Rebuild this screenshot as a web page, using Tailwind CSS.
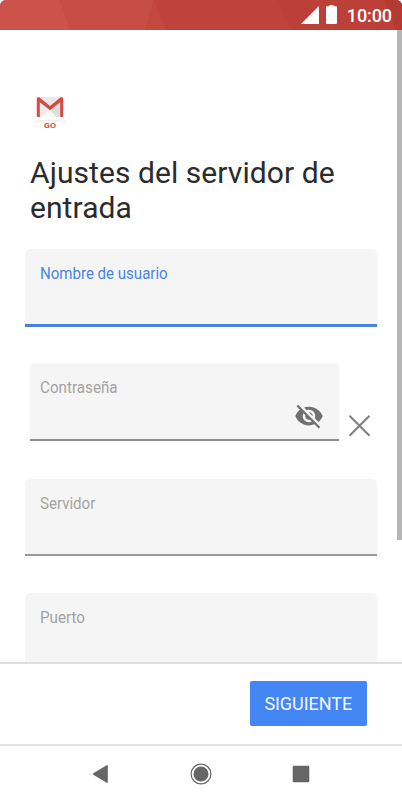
<!DOCTYPE html>
<html lang="es">
<head>
<meta charset="utf-8">
<meta name="viewport" content="width=device-width, initial-scale=1">
<title>Ajustes del servidor de entrada</title>
<script src="https://cdn.jsdelivr.net/npm/@tailwindcss/browser@4"></script>
</head>
<body class="bg-white">
<div class="flex h-[804px] w-[402px] flex-col overflow-hidden bg-white font-['Roboto',sans-serif]">
  <header class="relative h-[30px] shrink-0 overflow-hidden rounded-t-[6px] bg-[#bf433a]">
    <svg class="absolute inset-0" width="402" height="30" viewBox="0 0 402 30" aria-hidden="true">
      <path fill="#cb5349" d="M0 0H60L71 30H0z"/>
      <path fill="#c74e44" d="M60 0H154L145 30H71z"/>
      <path fill="#c3493f" d="M154 0L166 30H145z"/>
      <path fill="#bc4037" d="M278 0H402V30H291z"/>
      <path fill="#b43930" d="M384 0H402V30H396z"/>
    </svg>
    <div class="relative flex h-full items-center justify-end pr-[10px] text-white">
      <svg class="mr-[7px]" width="18" height="18" viewBox="0 0 18 18" fill="currentColor"><path d="M18 0V18H0z"/></svg>
      <svg class="mr-[10px] mb-[2px]" width="11" height="19" viewBox="0 0 11 19" fill="currentColor"><path d="M3 0h5v1.300h2q1 0 1 1V18q0 1-1 1H1q-1 0-1-1V2.300q0-1 1-1h2z"/></svg>
      <span class="pt-px text-[18px] leading-[30px] font-medium tracking-[-0.1px]">10:00</span>
    </div>
  </header>

  <main class="flex h-[632px] shrink-0 overflow-hidden">
    <div class="w-[397px] shrink-0 pt-[66px] pl-[25px]">
      <svg class="ml-[9px]" width="32" height="34" viewBox="0 0 32 34" aria-label="Gmail Go">
        <path fill="#ececec" d="M3 1h26v20H3z"/>
        <path fill="#f8f8f8" d="M7 21L16 13.500 25 21z"/>
        <path fill="#dedede" d="M16 14L26 5V21H22z"/>
        <path fill="#e8e8e8" d="M5 1.500h22L16 11z"/>
        <path fill="#d54b40" d="M2.800 2.300Q2.800 1.200 4 1.200H5.300L16 10 26.700 1.200H28q1.200 0 1.200 1.100V20q0 1-1 1H26.200V6.300L16 14.200 5.800 6.300V21H3.800q-1 0-1-1z"/>
        <path fill="#ededed" d="M0 25Q16 22.500 32 25V26Q16 24.500 0 26z"/>
        <text x="10" y="32" font-family="Roboto, sans-serif" font-size="7.200" font-weight="700" fill="#cd4b43" textLength="12" lengthAdjust="spacingAndGlyphs">GO</text>
      </svg>
      <h1 class="mt-[25px] ml-[5px] h-[71px] text-[30px] leading-[35px] tracking-[0.07px] text-[#2b2b2b]">Ajustes del servidor de<br>entrada</h1>

      <div class="mt-[23px] h-[78px] w-[352px] rounded-t-[5px] border-b-[3px] border-[#4a82dc] bg-[#f5f5f5] pt-[14.500px] pl-[15px]">
        <label class="block origin-left scale-x-[.94] text-[16px] leading-5 text-[#4a86e0]">Nombre de usuario</label>
      </div>
      <div class="mt-[36px] flex">
        <div class="ml-[5px] flex h-[78px] w-[309px] justify-between rounded-t-[5px] border-b-2 border-[#8d8d8d] bg-[#f5f5f5] pt-[15px] pr-[15px] pl-[10px]">
          <label class="block origin-left scale-x-[.95] text-[16px] leading-5 text-[#a3a3a3]">Contraseña</label>
          <svg class="mt-[23px]" width="30" height="30" viewBox="0 0 24 24" fill="#707070"><path d="M12 7c2.760 0 5 2.240 5 5 0 .65-.13 1.260-.36 1.830l2.920 2.920c1.510-1.260 2.700-2.890 3.430-4.750-1.730-4.390-6-7.500-11-7.500-1.400 0-2.740.25-3.980.7l2.160 2.160C10.740 7.130 11.350 7 12 7zM2 4.270l2.280 2.280.46.46C3.080 8.300 1.780 10.020 1 12c1.730 4.390 6 7.500 11 7.500 1.550 0 3.030-.3 4.380-.84l.42.42L19.730 22 21 20.730 3.270 3 2 4.270zM7.530 9.800l1.550 1.550c-.05.21-.08.43-.08.65 0 1.660 1.340 3 3 3 .22 0 .44-.03.65-.08l1.550 1.550c-.67.33-1.410.53-2.200.53-2.760 0-5-2.240-5-5 0-.79.2-1.530.53-2.200zm4.310-.78l3.150 3.150.02-.16c0-1.660-1.340-3-3-3l-.17.01z"/></svg>
        </div>
        <svg class="mt-[51px] ml-[9px]" width="23" height="23" viewBox="0 0 23 23" fill="none" stroke="#818181" stroke-width="2.100"><path d="M1.500 1.800l20 20M21.500 1.800l-20 20"/></svg>
      </div>
      <div class="mt-[38px] h-[77px] w-[352px] rounded-t-[5px] border-b-2 border-[#999] bg-[#f5f5f5] pt-[14.500px] pl-[15px]">
        <label class="block origin-left scale-x-[.94] text-[16px] leading-5 text-[#a3a3a3]">Servidor</label>
      </div>
      <div class="mt-[37px] h-[77px] w-[352px] rounded-t-[5px] bg-[#f5f5f5] pt-[14.500px] pl-[15px]">
        <label class="block origin-left scale-x-[.95] text-[16px] leading-5 text-[#a3a3a3]">Puerto</label>
      </div>
    </div>
    <div class="h-[510px] w-[5px] shrink-0 bg-[#b6b6b6]"></div>
  </main>

  <div class="flex h-[82px] shrink-0 items-start justify-end border-t-2 border-[#dfdfdf] bg-white pt-[17px] pr-[35px]">
    <button class="h-[45px] w-[117.500px] rounded-[2px] bg-[#4486f4] text-[18px] leading-[46px] tracking-[-0.05px] text-[#f3f8ff]">SIGUIENTE</button>
  </div>

  <nav class="flex h-[60px] shrink-0 items-center border-t-2 border-[#e2e2e2] bg-white pb-[2px] pl-[92px]">
    <svg width="17" height="20" viewBox="0 0 17 20" fill="#666"><path d="M1.300 9.300L14.700 1.200Q15.800.7 15.800 2V18Q15.800 19.300 14.700 18.800L1.300 10.700Q.4 10 1.300 9.300z"/></svg>
    <svg class="ml-[80.500px]" width="22" height="22" viewBox="0 0 22 22"><circle cx="11" cy="11" r="9.900" fill="none" stroke="#666" stroke-width="1.200"/><circle cx="11" cy="11" r="7.500" fill="#666"/></svg>
    <svg class="ml-[80.500px]" width="18" height="18" viewBox="0 0 18 18"><rect x=".7" y=".7" width="16.600" height="16.600" rx="1.200" fill="#666"/></svg>
  </nav>
</div>
</body>
</html>
